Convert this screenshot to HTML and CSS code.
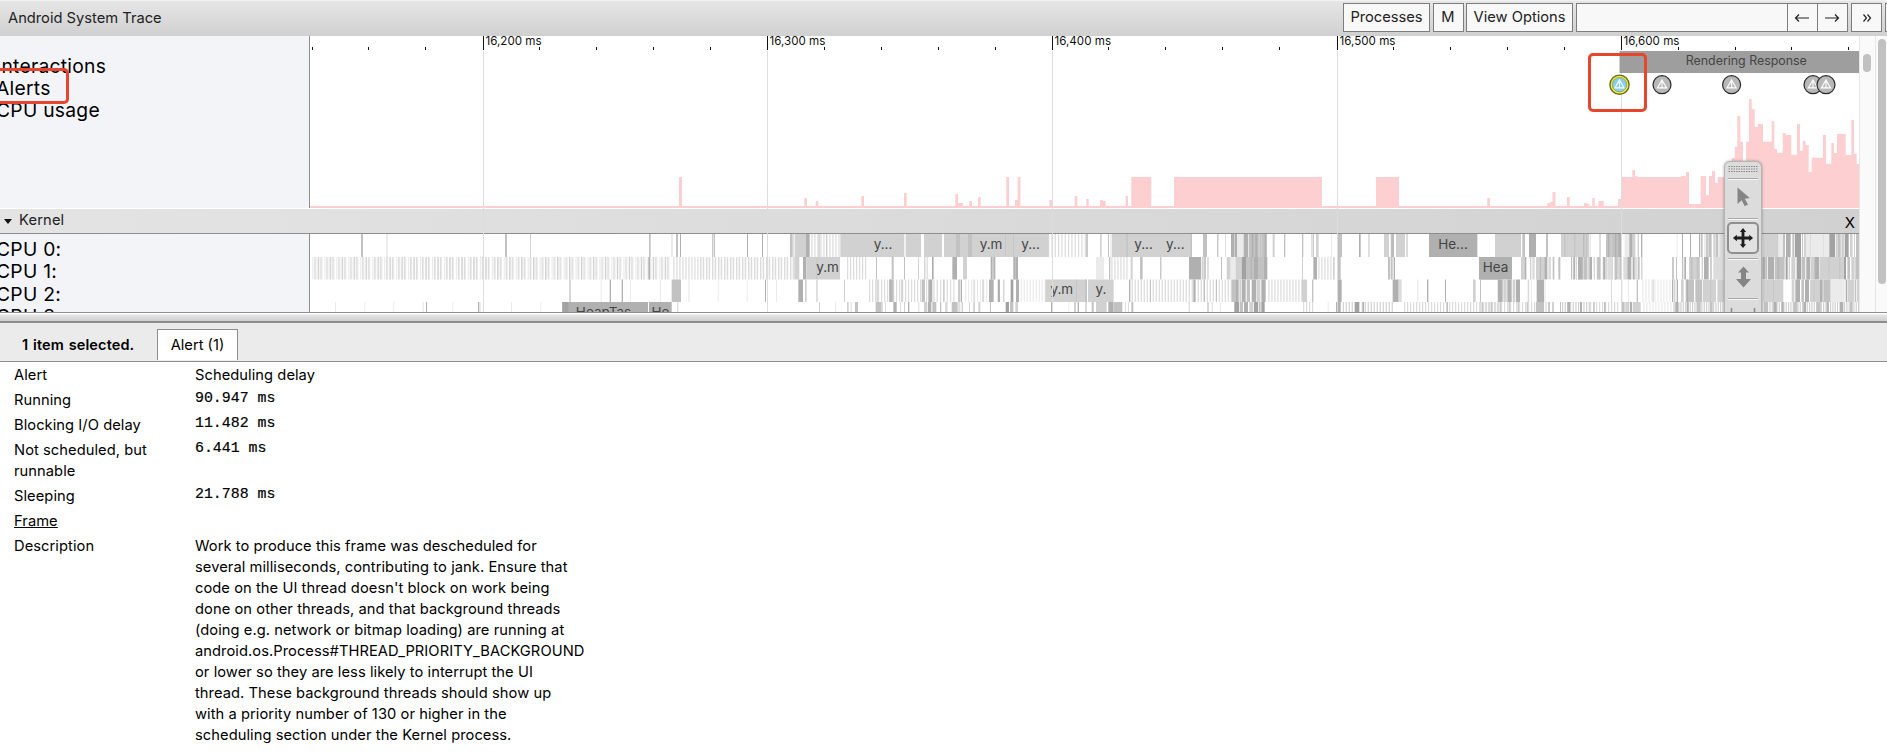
FILE: index.html
```html
<!DOCTYPE html>
<html lang="en">
<head>
<meta charset="utf-8">
<title>Android System Trace</title>
<link rel="stylesheet" href="styles.css">
</head>
<body>
<header class="topbar">
  <h1 class="title">Android System Trace</h1>
  <div class="controls">
    <button class="btn processes">Processes</button>
    <button class="btn metrics">M</button>
    <button class="btn options">View Options</button>
    <div class="find">
      <input class="find-input" type="text" aria-label="Find">
      <button class="btn step"><svg width="16" height="10" viewBox="0 0 16 10"><path d="M15 5H1.500M5 1.500L1.500 5 5 8.500"/></svg></button>
      <button class="btn step"><svg width="16" height="10" viewBox="0 0 16 10"><path d="M1 5h13.500M11 1.500L14.500 5 11 8.500"/></svg></button>
    </div>
    <button class="btn more"><svg width="10" height="10" viewBox="0 0 10 10"><path d="M1.500 1.500L4.500 5l-3 3.500M5.500 1.500L8.500 5l-3 3.500"/></svg></button>
    <button class="btn edge"></button>
  </div>
</header>

<main class="timeline">
  <div class="tracks">
    <section class="model">
      <div class="names names-top">
        <div class="name">Interactions</div>
        <div class="name">Alerts</div>
        <div class="name">CPU usage</div>
      </div>
      <svg class="plot" id="overview" width="1549" height="172" viewBox="310 36 1549 172"></svg>
    </section>
    <section class="process">
      <span class="triangle"></span><span class="process-name">Kernel</span><span class="close">X</span>
    </section>
    <section class="cpus">
      <div class="names names-cpu">
        <div class="name">CPU 0:</div>
        <div class="name">CPU 1:</div>
        <div class="name">CPU 2:</div>
        <div class="name">CPU 3:</div>
      </div>
      <svg class="plot" id="slices" width="1549" height="78" viewBox="310 234 1549 78"></svg>
    </section>
  </div>
  <div class="gutter inner"><div class="thumb"></div></div>
  <div class="gutter outer"><div class="thumb"></div></div>

  <svg class="grid" id="grid" width="1549" height="261" viewBox="310 51 1549 261"></svg>

  <div class="mark mark-label"></div>
  <div class="mark mark-alert"></div>

  <div class="toolbox">
    <svg width="30" height="16" viewBox="0 0 30 16"><path class="grip" d="M.5 4.500H30M.5 7H30M.5 9.500H30"/></svg>
    <div class="tool"><svg width="30" height="30" viewBox="0 0 30 30"><path class="icon" d="M9.500 5.500V22l4.200-3.800 3 6 3.300-1.600-3.200-5.800 5-.9z"/></svg></div>
    <div class="tool active"><svg width="32" height="32" viewBox="0 0 32 32"><path class="icon-on" d="M16 4.500l3.600 4.500h-2v5.400H23v-2l4.500 3.600-4.500 3.600v-2h-5.400V23h2L16 27.500 12.400 23h2v-5.400H9v2L4.500 16 9 12.400v2h5.400V9h-2z"/></svg></div>
    <div class="tool"><svg width="30" height="30" viewBox="0 0 30 30"><path class="icon" d="M15.500 4.500L21 10.500h-3V17h5l-7.500 8.500L8 17h5v-6.500h-3z"/></svg></div>
    <div class="tool"><svg width="30" height="30" viewBox="0 0 30 30"><path class="range" d="M3.500 6v12M26.500 6v12M3.500 11.500h23"/></svg></div>
  </div>
</main>

<div class="splitter"></div>

<nav class="tabs">
  <span class="selected">1 item selected.</span>
  <span class="tab">Alert (1)</span>
</nav>

<dl class="details">
  <dt>Alert</dt><dd>Scheduling delay</dd>
  <dt>Running</dt><dd class="num">90.947 ms</dd>
  <dt>Blocking I/O delay</dt><dd class="num">11.482 ms</dd>
  <dt>Not scheduled, but<br>runnable</dt><dd class="num">6.441 ms</dd>
  <dt>Sleeping</dt><dd class="num">21.788 ms</dd>
  <dt><u>Frame</u></dt><dd></dd>
  <dt>Description</dt>
  <dd>Work to produce this frame was descheduled for<br>several milliseconds, contributing to jank. Ensure that<br>code on the UI thread doesn't block on work being<br>done on other threads, and that background threads<br>(doing e.g. network or bitmap loading) are running at<br>android.os.Process#THREAD_PRIORITY_BACKGROUND<br>or lower so they are less likely to interrupt the UI<br>thread. These background threads should show up<br>with a priority number of 130 or higher in the<br>scheduling section under the Kernel process.</dd>
</dl>
<script src="trace.js"></script>
</body>
</html>
```
FILE: styles.css
```css
* { box-sizing: border-box; }
body {
  margin: 0;
  width: 1887px;
  height: 756px;
  overflow: hidden;
  background: #fff;
  color: #000;
  font: 14.7px/21px Inter, "Liberation Sans", sans-serif;
}
.topbar {
  display: flex;
  justify-content: space-between;
  height: 36px;
  padding: 3px 0 0 8px;
  overflow: hidden;
  background: linear-gradient(#e6e6e6, #d0d0d0);
  border-top: 1px solid #f2f2f2;
}
.title { margin: 4px 0 0; font-size: 14.7px; font-weight: 400; line-height: 21px; color: #222; }
.controls { display: flex; gap: 2.500px; width: 544px; flex: none; margin-top: -1px; }
.btn {
  flex: none;
  display: flex;
  align-items: center;
  justify-content: center;
  height: 29px;
  padding: 0;
  border: 1px solid #7d7d7d;
  background: #f8f8f8;
  color: #222;
  font: inherit;
}
.btn path { fill: none; stroke: #222; stroke-width: 1.2; }
.processes { width: 87px; }
.metrics { width: 31px; }
.options { width: 107px; }
.find { display: flex; width: 272px; }
.find-input { width: 212px; height: 29px; border: 1px solid #7d7d7d; background: #f8f8f8; }
.step { width: 31px; margin-left: -1px; }
.more { width: 31px; margin-left: 1px; }
.edge { width: 20px; }

.timeline { position: relative; display: flex; height: 276px; overflow: hidden; }
.tracks { width: 1859px; flex: none; }
.model, .cpus { display: flex; }
.model { height: 172px; }
.cpus { height: 78px; overflow: hidden; }
.names {
  flex: none;
  width: 310px;
  border-right: 1px solid #8e8e8e;
  background: #f3f4f7;
  overflow: hidden;
  font-size: 19.300px;
  letter-spacing: .25px;
  line-height: 22.400px;
}
.names-top { padding-top: 18.500px; }
.names-cpu { padding-top: 3.700px; }
.name { margin-left: -4px; white-space: nowrap; }
.plot { display: block; flex: none; }
.process {
  display: flex;
  align-items: center;
  height: 26px;
  padding: 0 4px 0 4px;
  border-top: 1px solid #fff;
  border-bottom: 1px solid #8e8e8e;
  background: linear-gradient(90deg, #e4e4e4, #d1d1d1);
}
.triangle { border: 4px solid transparent; border-top: 5px solid #111; border-bottom: 0; }
.process-name { flex: 1; margin: -2px 0 0 7px; color: #222; letter-spacing: .15px; }
.close { font-size: 15px; padding-top: 2px; }
.gutter { flex: none; height: 276px; background: #fafafa; border-left: 1px solid #e6e6e6; }
.inner { width: 16px; padding: 18px 0 0 3px; }
.outer { width: 12px; padding: 3px 0 0 2px; }
.thumb { width: 8px; border-radius: 4px; background: #c1c1c1; }
.inner .thumb { height: 18px; }
.outer .thumb { height: 245px; }
.grid { position: absolute; left: 310px; top: 15px; pointer-events: none; }
.mark { position: absolute; border: 3px solid #e8452c; border-radius: 5px; }
.mark-label { left: -6px; top: 32px; width: 75px; height: 36px; }
.mark-alert { left: 1588px; top: 17px; width: 59px; height: 59px; }
.toolbox {
  position: absolute;
  left: 1724px;
  top: 125px;
  width: 38px;
  height: 175px;
  padding: 0 3px;
  border: 1px solid #b5b5b5;
  border-radius: 6px;
  background: #dcdcdc;
  box-shadow: 0 0 3px rgba(0, 0, 0, .35);
}
.toolbox svg { display: block; }
.grip { stroke: #888; stroke-dasharray: 1.500 1; }
.tool { height: 40px; padding-top: 3px; border-top: 1px solid #aaa; box-shadow: inset 0 1px #f5f5f5; }
.active svg { margin-left: -1px; border: 2px solid #909090; border-radius: 5px; background: #e2e2e2; }
.icon { fill: #858585; }
.icon-on { fill: #1d1d1d; }
.range { fill: none; stroke: #888; stroke-width: 1.500; }

.splitter {
  height: 11px;
  border-top: 1px solid #8e8e8e;
  border-bottom: 2px solid #8e8e8e;
  background: linear-gradient(#fff 0, #fff 1px, #e4e4e4 2px, #cfcfcf 100%);
}
.tabs {
  display: flex;
  height: 39px;
  padding: 6px 0 0 22px;
  background: #ebebeb;
  border-bottom: 1px solid #8e8e8e;
}
.selected { width: 135px; padding-top: 5px; font-weight: 600; font-size: 14.500px; letter-spacing: .12px; word-spacing: 1px; }
.tab { width: 81px; height: 31px; padding-top: 5px; border: 1px solid #8e8e8e; border-bottom: 0; background: #fff; text-align: center; }
.details {
  display: grid;
  grid-template-columns: 181px 420px;
  row-gap: 4px;
  margin: 3px 0 0 14px;
  white-space: nowrap;
  letter-spacing: .06px;
}
.details dd { margin: 0; }
.details .num { font: 14.900px/17px "Liberation Mono", monospace; letter-spacing: 0; -webkit-text-stroke: .2px #000; }
.tick-label { font: 11.600px Inter, "Liberation Sans", sans-serif; fill: #111; }
.slice-label { font: 13.500px Inter, "Liberation Sans", sans-serif; fill: #444; text-anchor: middle; }
.response-label { font: 12.400px Inter, "Liberation Sans", sans-serif; fill: #444; text-anchor: middle; }
```
FILE: trace.js
```js
const NS = 'http://www.w3.org/2000/svg';
function add(parent, tag, attrs, text) {
  const el = document.createElementNS(NS, tag);
  for (const k in attrs) el.setAttribute(k, attrs[k]);
  if (text) el.textContent = text;
  parent.appendChild(el);
  return el;
}

const overview = document.getElementById('overview');
const slices = document.getElementById('slices');
const grid = document.getElementById('grid');

// Ruler
for (let i = 0; i < 28; i++) {
  const x = 312.2 + i * 56.92;
  const major = i % 5 === 3;
  if (major) {
    const sx = Math.round(x - 0.2);
    add(overview, 'rect', { x: sx, y: 36, width: 1, height: 14, fill: '#111' });
    add(overview, 'text', { x: sx + 2.5, y: 45.3, class: 'tick-label' }, '16,' + (200 + 100 * (i - 3) / 5) + ' ms');
    add(grid, 'rect', { x: sx, y: 51, width: 1, height: 261, fill: '#ddd' });
  } else {
    add(overview, 'rect', { x: Math.round(x - 0.7), y: 47, width: 1, height: 3, fill: '#111' });
  }
}

// CPU usage: [left, right, top]
const usage = [
  [310, 1859, 206], [679, 682, 177], [804.3, 807, 198], [815.7, 818.3, 201], [861.3, 864, 196],
  [904, 906.7, 193], [955.3, 958, 194], [957.7, 963, 203], [969.3, 972, 201], [978, 980.7, 197],
  [1006.3, 1009, 177], [1015, 1017.7, 200], [1017.7, 1020.5, 177], [1049.3, 1052, 200],
  [1074.7, 1077.3, 196], [1086.3, 1088.7, 199], [1100, 1103, 200], [1103, 1105.7, 201],
  [1125.7, 1128, 196], [1131.3, 1151.3, 177], [1174, 1322, 177], [1376, 1399, 177],
  [1487.3, 1490, 198], [1547.3, 1550, 203], [1550, 1552.5, 202], [1552.5, 1555.5, 192],
  [1567, 1569.7, 197], [1584, 1586.7, 203], [1586.7, 1589.3, 204], [1592.3, 1594.7, 198],
  [1598.3, 1603.7, 201], [1618, 1621.5, 199], [1621.5, 1689, 177], [1632.3, 1635, 170],
  [1635, 1637.7, 176], [1680.7, 1686, 176], [1686, 1689, 172], [1689, 1700.7, 204],
  [1700.7, 1706, 176], [1706, 1709, 195], [1709, 1712, 176], [1712, 1715, 171], [1715, 1717.7, 183],
  [1717.7, 1731.7, 177], [1731.7, 1734.7, 158], [1734.7, 1737.3, 146.7], [1737.3, 1740.3, 116],
  [1740.3, 1743, 141.7], [1743, 1746, 160.7], [1746, 1749, 141.7], [1749, 1751.7, 99],
  [1751.7, 1754.7, 109], [1754.7, 1757.7, 127], [1757.7, 1763, 124], [1763, 1771.7, 141.7],
  [1771.7, 1774.3, 121], [1774.3, 1777, 149], [1777, 1782.7, 152.7], [1782.7, 1785.7, 133],
  [1785.7, 1791.3, 135], [1791.3, 1797, 154.7], [1797, 1800, 124], [1800, 1802.7, 150.7],
  [1802.7, 1805.7, 141], [1805.7, 1808.7, 145], [1808.7, 1811.7, 172], [1811.7, 1823, 157.7],
  [1823, 1826, 135], [1826, 1831.3, 163.7], [1831.3, 1834, 143], [1834, 1837, 153],
  [1837, 1845.7, 134], [1845.7, 1851.3, 155], [1851.3, 1854, 120], [1854, 1856.7, 154], [1856.7, 1859, 164]
];
let path = '';
for (const [l, r, t] of usage) path += `M${l} 208V${t}H${r}V208z`;
add(overview, 'path', { d: path, fill: '#fecfd1' });

// Interaction and alerts, drawn above the grid lines
add(grid, 'rect', { x: 1619.5, y: 51, width: 239.5, height: 22, fill: '#9e9e9e' });
add(grid, 'text', { x: 1746.3, y: 65, class: 'response-label' }, 'Rendering Response');
function alertMark(x, fill, ring) {
  const y = 84.7;
  if (ring) {
    add(grid, 'circle', { cx: x, cy: y, r: 9.6, fill: '#f4f13c', stroke: '#6b6b1c', 'stroke-width': 1.4 });
    add(grid, 'circle', { cx: x, cy: y, r: 7.2, fill, stroke: '#8f9b3a', 'stroke-width': 0.8 });
  } else {
    add(grid, 'circle', { cx: x, cy: y, r: 9, fill, stroke: '#2a2a2a', 'stroke-width': 1.2 });
  }
  add(grid, 'path', { d: `M${x} ${y - 4.8}l4.600 8h-9.200zM${x} ${y - 3}v6`, fill: 'none', stroke: '#fff', 'stroke-width': 1.1 });
}
alertMark(1619.5, '#87cdf5', true);
[1662, 1731.6, 1813, 1826].forEach(x => alertMark(x, '#b8b8b8'));

// Scheduler slices. Offsets and widths are thirds of a pixel from the group's origin:
// "offset width shade"; a leading "~" gives stripes "~from to pitch shade".
const shades = ['', '#ebebeb', '#dcdcdc', '#d1d1d1', '#c2c2c2', '#b0b0b0', '#a2a2a2'];
const rows = [
  { y: 234, h: 23, groups: [
    [300, '183 6 4,258 6 1,615 6 4,690 3 3,1047 5 4,1113 6 1,1128 6 4,1140 3 5'],
    [700, '37 3 5,42 3 4,141 3 5,186 3 5,270 8 4,280 3 3,285 36 3,318 11 5,~334 418 9 2,356 3 4,378 3 3,421 192 3,617 46 3,672 54 3,732 84 3,768 12 4,804 12 4,816 225 3,916 2 4,940 2 4,~1044 1160 10 2,1041 5 3,1159 4 5'],
    [1100, '0 5 3,24 3 4,32 2 3,36 240 3,80 2 5,272 4 4,309 12 4,352 3 5,375 3 2,393 18 5,402 3 3,411 20 1,431 14 5,447 52 4,455 5 5,466 6 5,476 3 2,483 3 3,494 6 5,518 6 3,552 4 4,606 4 4,633 2 3,638 3 5,648 8 3,693 3 1,712 14 4,777 5 5,805 4 3,852 15 3,872 10 4,878 2 5,888 27 3,918 6 2,987 145 5,1185 15 3'],
    [1480, '45 78 3,127 8 4,147 21 5,198 6 4,243 84 3,253 3 4,283 3 4,310 3 5,318 4 4,329 3 2,357 6 2,378 44 4,384 3 5,392 3 3,405 4 5,415 8 5,434 14 1,448 10 5,458 8 3,473 4 3,483 4 5,590 3 1,606 3 5,630 3 5,657 3 5,662 6 4,672 5 1,679 4 5,685 10 4,700 6 3,707 8 4,718 14 2,847 46 3,893 2 5,897 12 1,909 6 4,918 14 5,937 6 4,945 18 6,966 3 4,972 6 3,978 70 1,990 3 2,1030 2 2,1048 17 6,1067 4 3,1072 10 4,1084 10 3,1095 11 6,1110 8 3,1122 3 3,1128 9 4']
  ]},
  { y: 257, h: 22.5, groups: [
    [300, '~37 1107 8.97 1,~43 1107 17.94 2,~53 1107 35.9 3,1045 5 5,~1120 1200 9 2'],
    [700, '~0 283 9 2,~4 283 18 1,283 15 3,309 10 5,319 101 3,350 2 4,~441 500 9 2,528 3 4,575 6 4,612 3 4,654 3 3,673 3 4,680 3 3,696 5 5,757 14 5,789 12 3,872 6 5,880 6 5,940 14 5,945 3 4,1188 12 1'],
    [1100, '0 12 1,27 4 4,~34 80 9 2,92 6 3,120 8 4,181 3 5,267 36 5,305 6 3,313 4 5,322 4 3,363 3 4,380 12 3,392 15 1,407 18 3,425 15 6,440 22 4,452 3 5,462 12 5,474 16 4,490 12 5,606 3 3,640 11 5,~655 700 9 2,699 5 3,712 10 4,864 6 4,872 6 4,881 4 5,1137 63 5'],
    [1480, '0 96 5,123 12 3,135 4 5,150 4 3,157 7 2,168 25 3,180 2 5,193 9 5,205 8 2,218 5 4,235 6 4,273 3 4,~278 420 9 3,281 4 5,294 14 5,310 12 4,328 8 5,352 8 4,370 6 5,382 14 2,404 9 4,418 5 4,430 12 2,442 12 5,458 6 5,466 4 3,473 6 4,484 3 4,577 4 5,588 3 4,606 4 4,613 5 5,627 33 3,632 6 4,650 6 4,665 4 3,672 14 5,690 6 3,700 32 2,847 10 5,857 5 4,864 18 5,884 30 4,893 3 5,917 6 6,926 4 3,934 12 3,950 14 6,966 10 4,979 12 5,993 10 3,1003 15 5,1020 72 3,1046 2 4,1078 3 4,1092 6 6,1102 8 4,1114 10 3,1126 11 4']
  ]},
  { y: 279.5, h: 22.5, groups: [
    [300, '808 4 4,902 3 1,929 4 5,965 4 5,990 3 1,1080 3 1,1115 28 4,1165 4 1'],
    [700, '53 3 1,140 3 1,195 3 5,228 3 1,295 14 5,315 5 3,349 4 3,432 3 3,~507 690 9 2,530 3 4,567 14 4,571 4 5,604 3 4,665 10 4,685 12 5,~700 765 10 2,730 3 4,775 4 5,782 4 5,~795 860 9 1,820 4 2,847 4 3,867 14 5,893 7 5,910 3 4,932 8 6,948 9 5,~962 1035 9 1,1036 124 3,1128 2 4,1157 3 5,1164 36 3'],
    [1100, '0 41 3,87 4 5,~95 395 9 2,150 3 4,280 6 5,311 4 4,348 3 4,395 14 4,408 8 5,418 5 3,425 12 5,440 10 4,455 14 5,471 10 3,484 13 5,~505 605 9 2,605 16 3,636 4 4,711 14 5,878 18 5,896 9 2,951 4 1,981 4 5,1035 3 5,1119 8 3,1193 4 4'],
    [1480, '0 3 4,54 14 5,70 10 3,82 13 5,98 8 3,108 12 5,143 5 2,153 3 1,170 22 5,193 4 1,393 3 2,424 3 2,444 3 1,470 4 4,~487 575 9 1,518 3 3,576 4 5,583 3 4,590 4 5,603 8 3,617 25 4,620 4 5,646 20 4,668 40 3,690 2 4,712 20 3,847 63 3,880 2 4,935 8 3,946 14 5,964 8 4,975 12 5,990 30 3,1001 2 4,1020 8 5,1030 22 4,1052 42 1,1097 5 5,1104 18 3,1124 4 4,1130 7 3']
  ]},
  { y: 302, h: 10, groups: [
    [300, '105 3 1,193 3 1,280 3 1,368 4 1,378 3 5,457 3 1,534 4 5,540 3 1,633 3 1,721 3 1,787 257 5,787 18 6,1047 68 5,1131 4 2'],
    [700, '357 3 3,405 3 1,441 5 3,452 3 2,465 9 4,527 18 4,545 4 2,555 3 2,580 10 5,600 3 2,612 3 3,624 4 5,655 3 2,672 10 3,684 10 5,697 12 4,720 4 4,735 8 2,755 18 4,775 6 2,785 4 3,807 3 3,820 4 4,835 6 3,870 3 4,917 10 6,930 10 4,946 8 3,1053 5 5,1105 3 1,1122 6 3,1133 4 5,1155 6 2,1175 6 4,1188 12 3'],
    [1100, '0 20 3,25 15 5,40 27 4,75 3 2,84 3 2,94 6 4,266 3 3,322 4 4,335 3 2,360 3 1,403 14 6,419 10 4,432 12 5,448 12 3,462 12 6,476 6 4,484 10 6,~609 645 9 2,683 3 1,708 14 5,~728 762 9 3,764 14 6,~785 880 9 3,788 4 5,~912 1200 9 2,1040 4 4'],
    [1480, '~0 165 9 2,~5 165 27 4,168 24 4,196 4 2,205 4 5,216 6 3,240 3 4,~246 330 8 3,262 8 5,300 6 5,~330 420 9 2,340 4 4,372 5 4,424 10 4,436 12 3,450 6 5,458 24 3,~490 600 9 1,~580 732 7 3,586 8 5,620 6 5,650 12 4,690 8 4,~847 1137 7 3,852 12 4,880 10 5,905 6 5,940 12 4,970 8 5,1010 12 4,1040 6 5,1080 10 5,1110 8 4']
  ]}
];
for (const row of rows) {
  const rect = (x, w, s) => add(slices, 'rect', { x, y: row.y, width: w, height: row.h, fill: shades[s] });
  for (const [origin, list] of row.groups) {
    for (const item of list.split(',')) {
      if (item[0] === '~') {
        const [from, to, pitch, s] = item.slice(1).split(' ').map(Number);
        for (let o = from; o < to; o += pitch) rect(origin + o / 3, 1.2, s);
      } else {
        const [o, w, s] = item.split(' ').map(Number);
        rect(origin + o / 3, w / 3, s);
      }
    }
  }
}
[
  [883, 248.5, 'y...'], [991, 248.5, 'y.m'], [1030.5, 248.5, 'y...'], [1143.5, 248.5, 'y...'], [1175.3, 248.5, 'y...'],
  [1453, 248.5, 'He...'], [827.5, 271.5, 'y.m'], [1495.5, 271.5, 'Hea'], [1061.8, 293.7, 'y.m'],
  [1101, 293.7, 'y.'], [603.5, 316.5, 'HeapTas'], [660.5, 316.5, 'He']
].forEach(([x, y, t]) => add(slices, 'text', { x, y, class: 'slice-label' }, t));
```
